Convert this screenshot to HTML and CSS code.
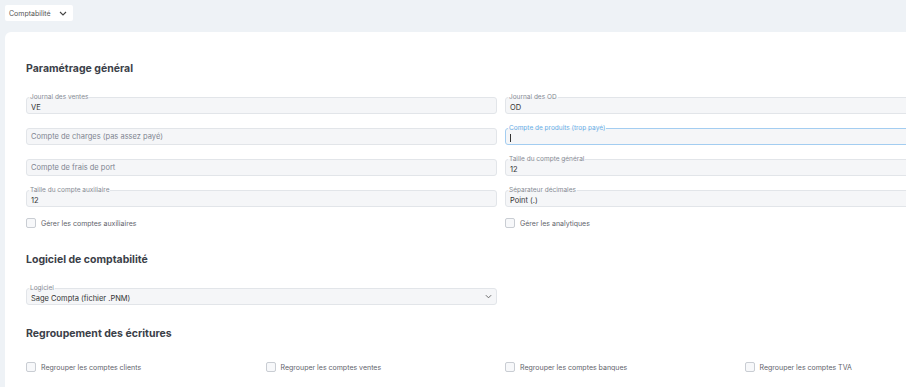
FILE: index.html
```html
<!DOCTYPE html>
<html>
<head>
    <meta charset="utf-8">
    <title>Comptabilité</title>
    <link rel="stylesheet" href="styles.css">
</head>
<body>
    <div class="page">
        <div class="module-select">
            <span>Comptabilité</span>
            <svg class="chevron" viewBox="0 0 8 5" width="8" height="5"><path d="M1 1l3 3 3-3" fill="none" stroke="#444" stroke-width="1.1"/></svg>
        </div>

        <div class="card">
            <section class="section general">
                <h2>Paramétrage général</h2>
                <div class="grid">
                    <div class="field">
                        <span class="label">Journal des ventes</span>
                        <div class="box filled">VE</div>
                    </div>
                    <div class="field">
                        <span class="label">Journal des OD</span>
                        <div class="box filled">OD</div>
                    </div>
                    <div class="field">
                        <div class="box placeholder">Compte de charges (pas assez payé)</div>
                    </div>
                    <div class="field focused">
                        <span class="label">Compte de produits (trop payé)</span>
                        <div class="box filled"><span class="caret"></span></div>
                    </div>
                    <div class="field">
                        <div class="box placeholder">Compte de frais de port</div>
                    </div>
                    <div class="field">
                        <span class="label">Taille du compte général</span>
                        <div class="box filled">12</div>
                    </div>
                    <div class="field">
                        <span class="label">Taille du compte auxiliaire</span>
                        <div class="box filled">12</div>
                    </div>
                    <div class="field">
                        <span class="label">Séparateur décimales</span>
                        <div class="box filled">Point (.)</div>
                    </div>
                    <label class="check"><span class="tick"></span>Gérer les comptes auxiliaires</label>
                    <label class="check"><span class="tick"></span>Gérer les analytiques</label>
                </div>
            </section>

            <section class="section">
                <h2>Logiciel de comptabilité</h2>
                <div class="grid">
                    <div class="field">
                        <span class="label">Logiciel</span>
                        <div class="box filled select">
                            Sage Compta (fichier .PNM)
                            <svg class="chevron" viewBox="0 0 8 5" width="7" height="5"><path d="M1 1l3 3 3-3" fill="none" stroke="#666" stroke-width="1.1"/></svg>
                        </div>
                    </div>
                </div>
            </section>

            <section class="section">
                <h2>Regroupement des écritures</h2>
                <div class="grid four">
                    <label class="check"><span class="tick"></span>Regrouper les comptes clients</label>
                    <label class="check"><span class="tick"></span>Regrouper les comptes ventes</label>
                    <label class="check"><span class="tick"></span>Regrouper les comptes banques</label>
                    <label class="check"><span class="tick"></span>Regrouper les comptes TVA</label>
                </div>
            </section>
        </div>
    </div>
</body>
</html>
```

FILE: styles.css
```css
html, body {
    margin: 0;
    overflow: hidden;
}
body {
    font-family: Inter, "Noto Sans", sans-serif;
    background-color: #eef2f6;
    color: #333;
}
.page {
    padding: 5px;
    width: 992px;
}
.module-select {
    display: flex;
    align-items: center;
    gap: 8px;
    width: fit-content;
    height: 16px;
    padding: 0 6px 0 4px;
    background-color: #fff;
    border-radius: 2px;
    font-size: 7px;
    color: #555;
}
.card {
    margin-top: 11px;
    padding: 30px 21px 40px;
    background-color: #fff;
    border-radius: 6px;
}
.section + .section {
    margin-top: 22px;
}
.section.general {
    padding-bottom: 2px;
}
h2 {
    margin: 0 0 18px;
    font-size: 10.5px;
    line-height: 13px;
    font-weight: 700;
    color: #3b4048;
}
.grid {
    display: grid;
    grid-template-columns: 1fr 1fr;
    column-gap: 8px;
    row-gap: 10px;
}
.grid.four {
    grid-template-columns: repeat(4, 1fr);
    margin-top: 21px;
}
.field {
    position: relative;
    padding-top: 4px;
}
.box {
    box-sizing: border-box;
    height: 17px;
    padding: 0 4px;
    border: 1px solid #e2e5e9;
    border-radius: 3px;
    background-color: #f5f6f8;
    font-size: 7.5px;
}
.box.filled {
    padding-top: 5px;
    line-height: 9px;
    color: #333;
}
.box.placeholder {
    line-height: 15px;
    color: #808590;
}
.label {
    position: absolute;
    top: 0;
    left: 3px;
    padding: 0 1px;
    font-size: 6.5px;
    line-height: 8px;
    color: #858a93;
    background: linear-gradient(#fff 50%, #f5f6f8 50%);
}
.focused .box {
    border-color: #a3cdf1;
}
.focused .label {
    color: #67ade6;
}
.caret {
    display: inline-block;
    width: 1px;
    height: 8px;
    background-color: #333;
    vertical-align: top;
}
.box.select {
    display: flex;
    justify-content: space-between;
}
.check {
    display: flex;
    align-items: center;
    gap: 5px;
    height: 12px;
    font-size: 7px;
    color: #5f646c;
}
.tick {
    box-sizing: border-box;
    width: 10px;
    height: 10px;
    border: 1px solid #c9cdd3;
    border-radius: 2px;
    background-color: #f7f8fa;
}
```
